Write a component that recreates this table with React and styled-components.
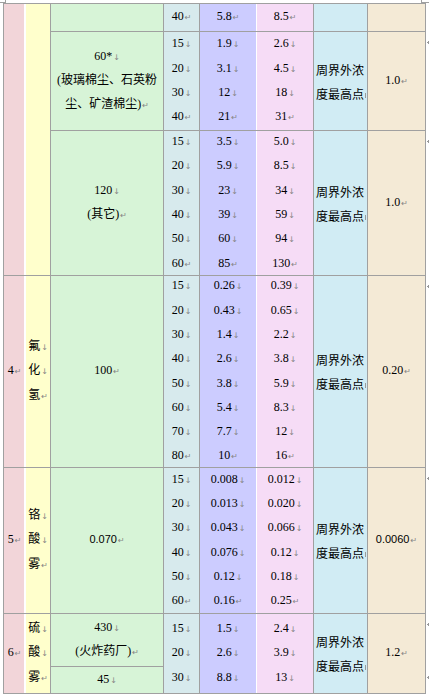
import React from "react";
import styled, { createGlobalStyle } from "styled-components";

const Global = createGlobalStyle`
  html, body { margin: 0; padding: 0; background: #fff; }
  body {
    font-family: "Liberation Serif", "Noto Sans CJK SC", serif;
    font-size: 12px;
    color: #000;
  }
`;

const TONES = {
  no: "#f2d5d9",
  name: "#ffffcc",
  limit: "#d7f4d7",
  height: "#d7eaed",
  rate: "#ccccff",
  rate2: "#f6dcf6",
  monitor: "#d1ecf4",
  conc: "#f4ead6",
};

const ROWS = "27px 98px 144px 191px 145px 52px 26px";
const LINE = "#a0a0a0";

const Page = styled.div`
  width: 429px;
  height: 698px;
  overflow: hidden;
  background: #fff;
`;

const CornerRow = styled.div`
  display: flex;
  justify-content: space-between;
  height: 3px;
`;

const CornerMark = styled.span`
  box-sizing: border-box;
  width: ${(p) => (p.$right ? "8px" : "6px")};
  height: 3px;
  border-bottom: 1px solid ${LINE};
  ${(p) => (p.$right ? `border-left: 1px solid ${LINE};` : `border-right: 1px solid ${LINE};`)}
`;

const TableRow = styled.div`
  display: flex;
  padding-left: 3px;
`;

const Table = styled.div`
  display: grid;
  grid-template-columns: 21px 24px 112px 35px 56px 56px 53px 57px;
  grid-template-rows: ${ROWS};
  gap: 1px;
  padding: 1px;
  background: ${LINE};
`;

const Cell = styled.div`
  background: ${(p) => TONES[p.$tone]};
  grid-row: ${(p) => (p.$span ? `span ${p.$span}` : "auto")};
  display: flex;
  flex-direction: column;
  justify-content: center;
  align-items: center;
  text-align: center;
  line-height: 23.3px;
  white-space: nowrap;
  min-width: 0;
  ${(p) => (p.$tone === "no" ? "box-shadow: 1px 0 0 #fff, inset -1px 0 0 #fff;" : "")}
  ${(p) => (p.$tone === "rate" ? "box-shadow: 1px 0 0 #fff;" : "")}
`;

const MonitorCell = styled(Cell)`
  align-items: flex-start;
  text-align: left;
  padding: 3px 0 0 2px;
  line-height: 24px;
`;

const Line = styled.div`
  line-height: inherit;
`;

const Fmt = styled.span`
  font-family: "DejaVu Sans", sans-serif;
  font-size: 8px;
  color: #858585;
  margin-left: 1px;
`;

/* the paragraph mark that the narrow cell clips to a stub */
const ClippedMark = styled.span`
  display: inline-block;
  width: 1px;
  height: 5px;
  margin-left: 1px;
  background: #9a9a9a;
  vertical-align: 1px;
`;

const Sans = styled.span`
  font-family: "Liberation Sans", sans-serif;
  font-size: 11px;
`;

const EndMarks = styled.div`
  display: grid;
  grid-template-rows: ${ROWS};
  row-gap: 1px;
  padding-top: 1px;
  width: 4px;
  margin-left: 1px;
`;

const EndMark = styled.span`
  display: block;
  width: 3px;
  height: 3px;
  margin-top: 9px;
  visibility: ${(p) => (p.$hidden ? "hidden" : "visible")};
  background:
    linear-gradient(#999, #999) 1px 0 / 1px 3px no-repeat,
    linear-gradient(#999, #999) 0 1px / 3px 1px no-repeat;
`;

const Mark = ({ t }) => (t ? <Fmt>{t === "p" ? "↵" : "↓"}</Fmt> : null);

/* items: strings, or [text, mark] pairs; mark "b" = line break, "p" = paragraph, null = none */
function lines(items, last = "p") {
  return items.map((it, i) => {
    const [text, mark] = Array.isArray(it)
      ? it
      : [it, i === items.length - 1 ? last : "b"];
    return (
      <Line key={i}>
        {text}
        <Mark t={mark} />
      </Line>
    );
  });
}

const monitor = (
  <>
    <Line>周界外浓</Line>
    <Line>
      度最高点
      <ClippedMark />
    </Line>
  </>
);

const groups = [
  {
    limit: [["60*", "b"], ["(玻璃棉尘、石英粉", null], ["尘、矿渣棉尘)", "p"]],
    h: ["15", "20", "30", "40"],
    r: ["1.9", "3.1", "12", "21"],
    r2: ["2.6", "4.5", "18", "31"],
    c: "1.0",
  },
  {
    limit: ["120", "(其它)"],
    h: ["15", "20", "30", "40", "50", "60"],
    r: ["3.5", "5.9", "23", "39", "60", "85"],
    r2: ["5.0", "8.5", "34", "59", "94", "130"],
    c: "1.0",
  },
];

export default function App() {
  return (
    <Page>
      <Global />
      <CornerRow>
        <CornerMark />
        <CornerMark $right />
      </CornerRow>
      <TableRow>
        <Table>
          {/* rows 1-3: continuation of the previous item */}
          <Cell $tone="no" $span={3} />
          <Cell $tone="name" $span={3} />
          <Cell $tone="limit" />
          <Cell $tone="height">{lines(["40"])}</Cell>
          <Cell $tone="rate">{lines(["5.8"])}</Cell>
          <Cell $tone="rate2">{lines(["8.5"])}</Cell>
          <Cell $tone="monitor" />
          <Cell $tone="conc" />

          {groups.map((g, i) => (
            <React.Fragment key={i}>
              <Cell $tone="limit">{lines(g.limit)}</Cell>
              <Cell $tone="height">{lines(g.h)}</Cell>
              <Cell $tone="rate">{lines(g.r)}</Cell>
              <Cell $tone="rate2">{lines(g.r2)}</Cell>
              <MonitorCell $tone="monitor">{monitor}</MonitorCell>
              <Cell $tone="conc">{lines([g.c])}</Cell>
            </React.Fragment>
          ))}

          {/* 4 氟化氢 */}
          <Cell $tone="no">{lines(["4"])}</Cell>
          <Cell $tone="name">{lines(["氟", "化", "氢"])}</Cell>
          <Cell $tone="limit">{lines(["100"])}</Cell>
          <Cell $tone="height">{lines(["15", "20", "30", "40", "50", "60", "70", "80"])}</Cell>
          <Cell $tone="rate">{lines(["0.26", "0.43", "1.4", "2.6", "3.8", "5.4", "7.7", "10"])}</Cell>
          <Cell $tone="rate2">{lines(["0.39", "0.65", "2.2", "3.8", "5.9", "8.3", "12", "16"])}</Cell>
          <MonitorCell $tone="monitor">{monitor}</MonitorCell>
          <Cell $tone="conc">{lines(["0.20"])}</Cell>

          {/* 5 铬酸雾 */}
          <Cell $tone="no">{lines(["5"])}</Cell>
          <Cell $tone="name">{lines(["铬", "酸", "雾"])}</Cell>
          <Cell $tone="limit">
            <Line>
              <Sans>0.070</Sans>
              <Mark t="p" />
            </Line>
          </Cell>
          <Cell $tone="height">{lines(["15", "20", "30", "40", "50", "60"])}</Cell>
          <Cell $tone="rate">{lines(["0.008", "0.013", "0.043", "0.076", "0.12", "0.16"])}</Cell>
          <Cell $tone="rate2">{lines(["0.012", "0.020", "0.066", "0.12", "0.18", "0.25"])}</Cell>
          <MonitorCell $tone="monitor">{monitor}</MonitorCell>
          <Cell $tone="conc">
            <Line>
              <Sans>0.0060</Sans>
              <Mark t="p" />
            </Line>
          </Cell>

          {/* 6 硫酸雾 */}
          <Cell $tone="no" $span={2}>{lines(["6"])}</Cell>
          <Cell $tone="name" $span={2}>{lines(["硫", "酸", "雾"])}</Cell>
          <Cell $tone="limit">{lines(["430", "(火炸药厂)"])}</Cell>
          <Cell $tone="height" $span={2}>{lines(["15", "20", "30"], "b")}</Cell>
          <Cell $tone="rate" $span={2}>{lines(["1.5", "2.6", "8.8"], "b")}</Cell>
          <Cell $tone="rate2" $span={2}>{lines(["2.4", "3.9", "13"], "b")}</Cell>
          <MonitorCell $tone="monitor" $span={2}>{monitor}</MonitorCell>
          <Cell $tone="conc" $span={2}>{lines(["1.2"])}</Cell>
          <Cell $tone="limit">{lines(["45"], "b")}</Cell>
        </Table>
        <EndMarks>
          {[true, false, false, false, false, false, false].map((h, i) => (
            <div key={i}>
              <EndMark $hidden={h} />
            </div>
          ))}
        </EndMarks>
      </TableRow>
    </Page>
  );
}
